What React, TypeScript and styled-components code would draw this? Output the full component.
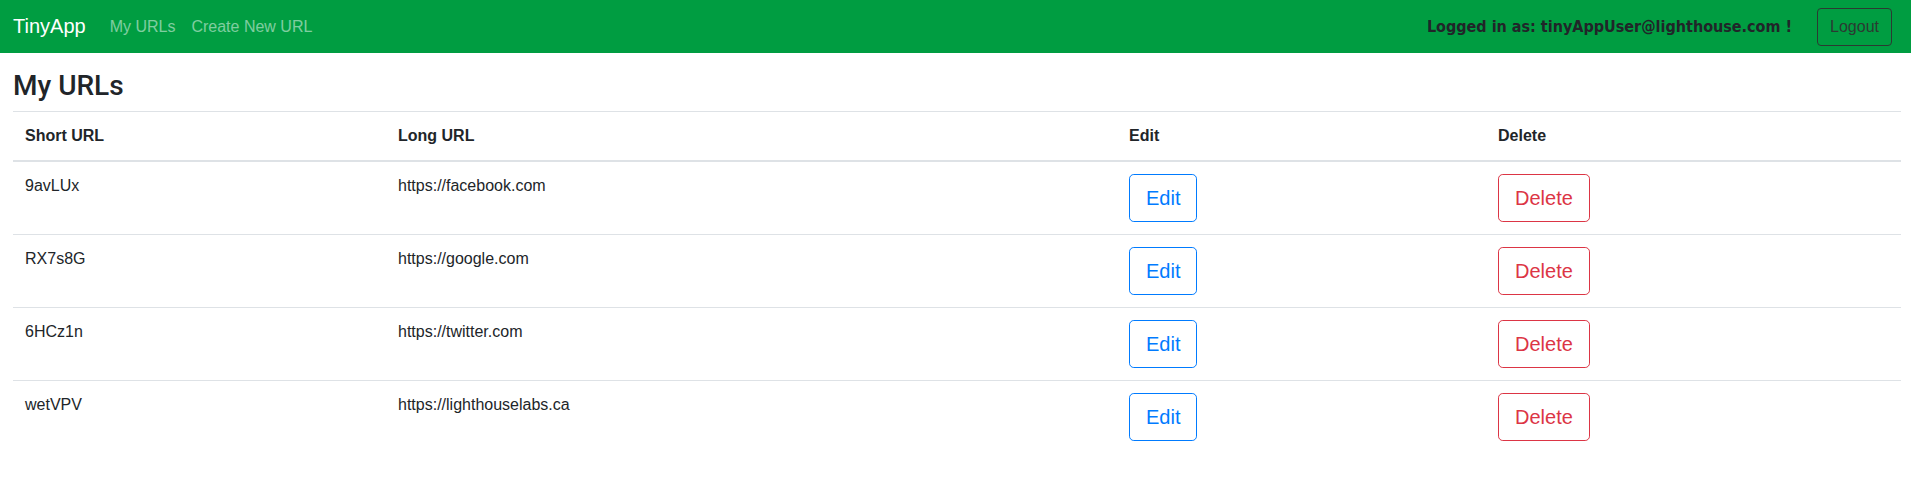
import React from 'react'
import styled, { createGlobalStyle } from 'styled-components'

const GlobalStyle = createGlobalStyle`
  body {
    margin: 0;
    background: #fff;
    color: #212529;
    font-family: "Liberation Sans", Arial, sans-serif;
    font-size: 16px;
  }
`

const Navbar = styled.nav`
  display: flex;
  align-items: center;
  height: 53px;
  padding: 0 19px 0 13px;
  background: #009d41;
`

const Brand = styled.a`
  font-size: 20px;
  color: #fff;
  margin-right: 16px;
  text-decoration: none;
`

const NavLink = styled.a`
  padding: 0 8px;
  font-size: 16px;
  color: rgba(255, 255, 255, 0.5);
  text-decoration: none;
`

const Spacer = styled.div`
  flex: 1;
`

const Greeting = styled.span`
  font-family: "DejaVu Sans Condensed", "DejaVu Sans", sans-serif;
  font-weight: bold;
  font-size: 16px;
  color: #212529;
  margin-right: 25px;
`

const OutlineButton = styled.button<{ $tone: string; $large?: boolean }>`
  font-family: inherit;
  background: transparent;
  color: ${p => p.$tone};
  border: 1px solid ${p => p.$tone};
  border-radius: ${p => (p.$large ? '4.8px' : '4px')};
  font-size: ${p => (p.$large ? '20px' : '16px')};
  line-height: 1.5;
  padding: ${p => (p.$large ? '8px 16px' : '6px 12px')};
  cursor: pointer;
`

const Main = styled.main`
  padding: 16px 10px 0 13px;
`

const Heading = styled.h3`
  margin: 0 0 8px;
  font-family: Roboto, "Liberation Sans", sans-serif;
  font-size: 28px;
  font-weight: 500;
  line-height: 1.2;
`

const Table = styled.table`
  width: 100%;
  border-collapse: collapse;
  table-layout: fixed;
`

const Th = styled.th`
  text-align: left;
  padding: 12px;
  line-height: 1.5;
  font-weight: bold;
  border-top: 1px solid #dee2e6;
  border-bottom: 2px solid #dee2e6;
`

const Td = styled.td`
  padding: 12px;
  line-height: 1.5;
  vertical-align: top;
  border-top: 1px solid #dee2e6;
`

const urls = [
  { short: '9avLUx', long: 'https://facebook.com' },
  { short: 'RX7s8G', long: 'https://google.com' },
  { short: '6HCz1n', long: 'https://twitter.com' },
  { short: 'wetVPV', long: 'https://lighthouselabs.ca' },
]

export default function App() {
  return (
    <>
      <GlobalStyle />
      <Navbar>
        <Brand href="#">TinyApp</Brand>
        <NavLink href="#">My URLs</NavLink>
        <NavLink href="#">Create New URL</NavLink>
        <Spacer />
        <Greeting>Logged in as: tinyAppUser@lighthouse.com !</Greeting>
        <OutlineButton $tone="#2b3a32">Logout</OutlineButton>
      </Navbar>
      <Main>
        <Heading>My URLs</Heading>
        <Table>
          <colgroup>
            <col style={{ width: 373 }} />
            <col style={{ width: 731 }} />
            <col style={{ width: 369 }} />
            <col />
          </colgroup>
          <thead>
            <tr>
              <Th>Short URL</Th>
              <Th>Long URL</Th>
              <Th>Edit</Th>
              <Th>Delete</Th>
            </tr>
          </thead>
          <tbody>
            {urls.map(u => (
              <tr key={u.short}>
                <Td>{u.short}</Td>
                <Td>{u.long}</Td>
                <Td>
                  <OutlineButton $tone="#007bff" $large>Edit</OutlineButton>
                </Td>
                <Td>
                  <OutlineButton $tone="#dc3545" $large>Delete</OutlineButton>
                </Td>
              </tr>
            ))}
          </tbody>
        </Table>
      </Main>
    </>
  )
}
